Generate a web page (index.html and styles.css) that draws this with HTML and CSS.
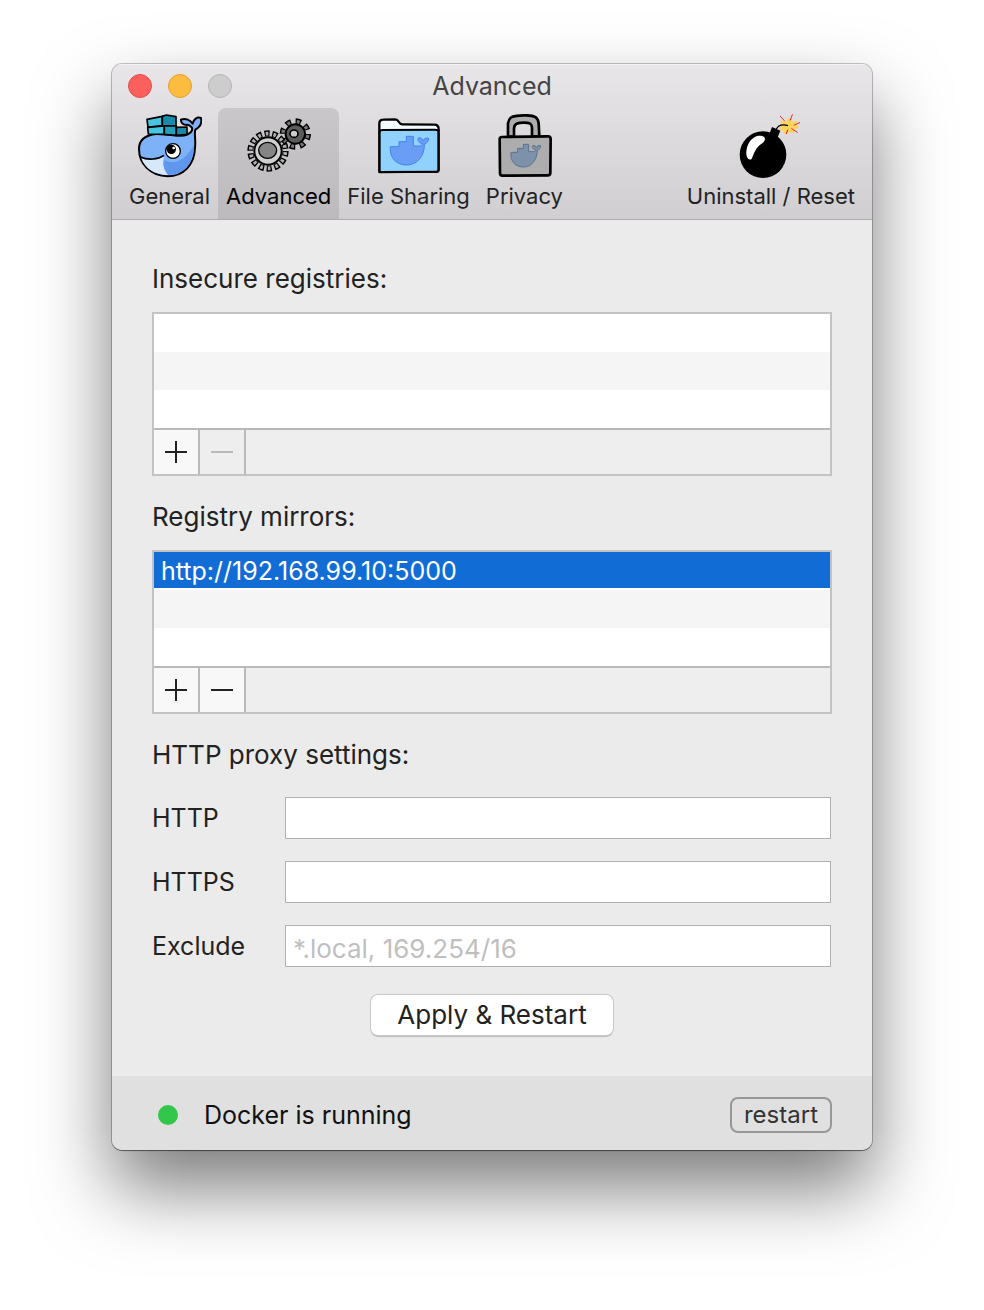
FILE: index.html
```
<!DOCTYPE html>
<html lang="en">
<head>
    <meta charset="UTF-8">
    <meta name="viewport" content="width=device-width, initial-scale=1.0">
    <title>Advanced</title>
    <link rel="stylesheet" href="styles.css">
</head>
<body>
    <main class="window">
        <header class="header">
            <div class="titlebar">
                <div class="lights">
                    <button class="light close" aria-label="Close"></button>
                    <button class="light minimize" aria-label="Minimize"></button>
                    <button class="light zoom" aria-label="Zoom" disabled></button>
                </div>
                <h1 class="title">Advanced</h1>
            </div>
            <nav class="toolbar">
                <button class="tab">
                    <svg class="icon" viewBox="39 27 192 192" aria-hidden="true">
                        <g stroke="#000" stroke-width="5" stroke-linejoin="round">
                            <path fill="#7db1f8" stroke-width="6" d="M42 132C42 105 60 90 95 87C135 86 165 100 188 88C200 82 203 76 201 68C195 62 190 58 186 60C174 60 167 54 168 44C182 38 196 46 203 56C206 42 216 35 228 39C232 56 222 68 211 74C207 86 213 105 210 130C208 180 175 214 128 214C75 213 42 175 42 132Z"/>
                            <path fill="#d8e8fb" stroke="none" d="M49 160C75 168 95 165 117 154C112 175 117 195 130 210C90 210 60 192 49 160Z"/>
                            <path fill="#5f97ee" stroke="none" d="M117 165C130 172 150 175 165 166C190 152 200 130 207 120C207 176 176 210 130 210C117 195 113 180 117 165Z"/>
                            <path fill="none" d="M46 156C70 166 98 164 117 151"/>
                            <path fill="#46c5e0" d="M66 43L112 34V62L69 67Z"/>
                            <path fill="#168bab" d="M112 34L124 30L153 35V63L112 62Z"/>
                            <path fill="#46c5e0" d="M68 67L118 63V88L70 87Z"/>
                            <path fill="#23a0bd" d="M118 63H154V91L118 88Z"/>
                            <path fill="#168bab" d="M154 67L186 66V88L154 91Z"/>
                        </g>
                        <circle cx="144" cy="138" r="22" fill="#fff" stroke="#000" stroke-width="4"/>
                        <circle cx="139" cy="133" r="14"/>
                        <circle cx="146" cy="129" r="4" fill="#fff"/>
                    </svg>
                    <span>General</span>
                </button>
                <button class="tab active" aria-current="page">
                    <svg class="icon" viewBox="33 12 192 192" aria-hidden="true">
                        <g fill="none">
                            <circle cx="178" cy="72" r="38" stroke="#000" stroke-width="18" pathLength="8" stroke-dasharray=".54 .46"/>
                            <circle cx="178" cy="72" r="37" stroke="#777" stroke-width="11" pathLength="8" stroke-dasharray=".3 .7" stroke-dashoffset="-.12"/>
                            <circle cx="178" cy="72" r="29" fill="#5c5c5c" stroke="#000" stroke-width="6"/>
                            <ellipse cx="174" cy="71" rx="12" ry="11" fill="#ccc" stroke="#000" stroke-width="5"/>
                            <circle cx="96" cy="123" r="53" stroke="#000" stroke-width="18" pathLength="14" stroke-dasharray=".66 .34"/>
                            <circle cx="96" cy="123" r="52" stroke="#b0b0b0" stroke-width="11" pathLength="14" stroke-dasharray=".34 .66" stroke-dashoffset="-.16"/>
                            <circle cx="96" cy="123" r="41" fill="#cfcfcf" stroke="#000" stroke-width="6"/>
                            <ellipse cx="95" cy="121" rx="27" ry="24" fill="#858585" stroke="#000" stroke-width="4"/>
                        </g>
                    </svg>
                    <span>Advanced</span>
                </button>
                <button class="tab">
                    <svg class="icon" viewBox="31 12 192 192" aria-hidden="true">
                        <path fill="#f4fbff" stroke="#000" stroke-width="7" stroke-linejoin="round" d="M38 186V40Q38 29 50 29L86 28C98 28 94 43 107 43L203 44Q216 44 216 58V179Q216 185 208 185Z"/>
                        <path fill="#90d2fd" stroke="#000" stroke-width="6" stroke-linejoin="round" d="M39 186V66Q39 60 48 60L204 59Q215 59 215 65V179Q215 185 208 185Z"/>
                        <path fill="#6a9ef6" stroke="#4283e9" stroke-width="3" stroke-linejoin="round" d="M71 110H97V95H119V79H140V108H158C164 107 167 105 167 101C156 98 152 90 155 84C162 82 168 86 170 92C172 86 178 82 186 85C186 94 180 100 173 103C174 140 150 165 120 165C90 165 68 145 71 110Z"/>
                    </svg>
                    <span>File Sharing</span>
                </button>
                <button class="tab">
                    <svg class="icon" viewBox="24 27 192 192" aria-hidden="true">
                        <g fill="#adadad" stroke="#000" stroke-width="8" stroke-linejoin="round">
                            <path d="M72 95V55C75 34 88 32 120 31C155 30 162 38 164 55L166 95H144V68C143 56 138 53 120 53C100 53 91 56 90 70V95Z"/>
                            <path d="M54 96L192 94Q200 94 200 102L199 204Q199 211 191 211L55 212Q48 212 48 204L47 103Q47 96 54 96Z"/>
                        </g>
                        <path fill="#7e91aa" stroke="#5d7290" stroke-width="3" stroke-linejoin="round" d="M81 142H101V130H118V118H134V140H148C153 139 155 138 155 135C146 132 143 127 146 122C151 120 156 123 157 128C159 123 163 120 170 122C170 130 165 134 160 136C160 165 142 186 119 186C95 186 78 170 81 142Z"/>
                    </svg>
                    <span>Privacy</span>
                </button>
                <button class="tab reset">
                    <svg class="icon" viewBox="207 177 192 192" aria-hidden="true">
                        <path fill="#ffd35c" d="M330 196L346 200L358 188L366 200L382 196L377 208L388 218L373 223L372 235L358 232L344 239L340 228L326 222L336 211Z"/>
                        <circle cx="279" cy="299" r="70"/>
                        <path d="M306 216L331 227L321 252L297 240Z"/>
                        <path fill="#fff" d="M262 243C282 240 292 250 279 263C257 276 252 295 245 312C234 318 228 305 229 290C231 265 245 248 262 243Z"/>
                        <path fill="none" stroke="#000" stroke-width="4" d="M318 224C324 211 338 207 354 212"/>
                        <path fill="none" stroke="#e3262b" stroke-width="3" stroke-linecap="round" d="M331 184L343 197M367 179L361 195M389 203L373 210M382 232L365 221M349 236L353 225"/>
                    </svg>
                    <span>Uninstall / Reset</span>
                </button>
            </nav>
        </header>

        <form class="content">
            <section class="section">
                <h2 class="label" id="insecure">Insecure registries:</h2>
                <div class="box">
                    <ul class="list" role="listbox" aria-labelledby="insecure">
                        <li class="row"></li>
                        <li class="row"></li>
                        <li class="row"></li>
                    </ul>
                    <div class="actions">
                        <button class="action plus" type="button" aria-label="Add registry"></button>
                        <button class="action" type="button" aria-label="Remove registry" disabled></button>
                    </div>
                </div>
            </section>

            <section class="section">
                <h2 class="label" id="mirrors">Registry mirrors:</h2>
                <div class="box">
                    <ul class="list" role="listbox" aria-labelledby="mirrors">
                        <li class="row selected" role="option" aria-selected="true">http://192.168.99.10:5000</li>
                        <li class="row"></li>
                        <li class="row"></li>
                    </ul>
                    <div class="actions">
                        <button class="action plus" type="button" aria-label="Add mirror"></button>
                        <button class="action" type="button" aria-label="Remove mirror"></button>
                    </div>
                </div>
            </section>

            <section>
                <h2 class="label">HTTP proxy settings:</h2>
                <div class="fields">
                    <label for="http">HTTP</label>
                    <input class="input" id="http" type="text">
                    <label for="https">HTTPS</label>
                    <input class="input" id="https" type="text">
                    <label for="exclude">Exclude</label>
                    <input class="input" id="exclude" type="text" placeholder="*.local, 169.254/16">
                </div>
            </section>

            <button class="apply" type="button">Apply &amp; Restart</button>
        </form>

        <footer class="footer">
            <span class="dot"></span>
            <span class="status">Docker is running</span>
            <button class="restart">restart</button>
        </footer>
    </main>
</body>
</html>
```
FILE: styles.css
```
* {
    box-sizing: border-box;
}
body {
    margin: 0;
    padding: 64px 112px 160px;
    background-color: #fff;
    color: #222;
    font-family: Inter, "Liberation Sans", sans-serif;
    font-size: 25px;
    line-height: 32px;
}
button,
input {
    font: inherit;
    color: inherit;
    margin: 0;
}
button {
    padding: 0;
    border: none;
    background: none;
}
h1,
h2 {
    margin: 0;
    font-size: 25px;
    font-weight: 400;
}
.window {
    background-color: #ebebeb;
    border-radius: 10px;
    overflow: hidden;
    box-shadow: 0 0 0 1px rgba(0, 0, 0, 0.22), 0 1px 1px rgba(0, 0, 0, 0.4), 0 38px 74px rgba(0, 0, 0, 0.52);
}

/* header */
.header {
    background: linear-gradient(#e8e6e8, #d0ced0);
    border-bottom: 1px solid #adabad;
    box-shadow: inset 0 1px 0 #f5f4f5;
}
.titlebar {
    display: grid;
    grid-template-columns: 1fr auto 1fr;
    align-items: center;
    height: 44px;
    padding: 0 16px;
}
.lights {
    display: flex;
    gap: 16px;
}
.light {
    width: 24px;
    height: 24px;
    border-radius: 50%;
    border: 1px solid #e2504b;
    background-color: #fc605c;
}
.light.minimize {
    border-color: #e0a032;
    background-color: #fdbc40;
}
.light.zoom {
    border-color: #b4b4b4;
    background-color: #cdcdcd;
}
.title {
    color: #444;
}
.toolbar {
    display: flex;
    padding: 0 9px;
}
.tab {
    display: flex;
    flex-direction: column;
    align-items: center;
    gap: 6px;
    padding: 6px 8px 11px;
    font-size: 22px;
    line-height: 24px;
    white-space: nowrap;
}
.tab.active {
    border-radius: 8px 8px 0 0;
    background: linear-gradient(#c9c7c9, #bcbabc);
    color: #000;
}
.tab.reset {
    margin-left: auto;
}
.icon {
    width: 64px;
    height: 64px;
}

/* content */
.content {
    display: flex;
    flex-direction: column;
    padding: 43px 40px 41px;
}
.section {
    margin-bottom: 25px;
}
.label {
    font-size: 26px;
}
.box {
    margin-top: 17px;
    border: 2px solid #c3c3c3;
}
.list {
    margin: 0;
    padding: 0;
    list-style: none;
    border-bottom: 2px solid #b9b9b9;
}
.row {
    height: 38px;
    padding: 0 7px;
    line-height: 38px;
    background-color: #fff;
}
.row:nth-child(even) {
    background-color: #f5f5f5;
}
.row.selected {
    border-bottom: 2px solid #fff;
    background-color: #116cd6;
    color: #fff;
}
.actions {
    display: flex;
    height: 44px;
    background-color: #eee;
}
.action {
    display: grid;
    place-items: center;
    width: 46px;
    border-right: 2px solid #b9b9b9;
    background-color: #f8f8f8;
}
.action::before,
.action.plus::after {
    content: "";
    grid-area: 1 / 1;
    width: 22px;
    height: 2px;
    background-color: #222;
}
.action.plus::after {
    width: 2px;
    height: 22px;
}
.action:disabled {
    background-color: #eee;
}
.action:disabled::before {
    background-color: #b9b9b9;
}
.fields {
    display: grid;
    grid-template-columns: 111px 1fr;
    gap: 22px;
    align-items: center;
    margin-top: 26px;
    padding-right: 1px;
}
.input {
    width: 100%;
    height: 42px;
    padding: 4px 7px 0;
    border: 1px solid #b0b0b0;
    border-radius: 0;
    background-color: #fff;
    font-size: 26px;
}
.input::placeholder {
    color: #bfbfbf;
}
.apply {
    align-self: center;
    height: 40px;
    margin-top: 28px;
    padding: 0 26px;
    border-radius: 7px;
    background-color: #fff;
    box-shadow: 0 0 0 1px #c8c8c8, 0 2px 1px rgba(0, 0, 0, 0.2);
    font-size: 26px;
}

/* footer */
.footer {
    display: flex;
    align-items: center;
    height: 74px;
    padding: 4px 40px 0 46px;
    background-color: #e0e0e0;
    color: #111;
}
.dot {
    width: 20px;
    height: 20px;
    border-radius: 50%;
    background-color: #32c74a;
}
.status {
    margin-left: 26px;
}
.restart {
    height: 36px;
    margin-left: auto;
    padding: 0 12px;
    border: 2px solid #979797;
    border-radius: 8px;
    font-size: 24px;
    color: #333;
}
```
